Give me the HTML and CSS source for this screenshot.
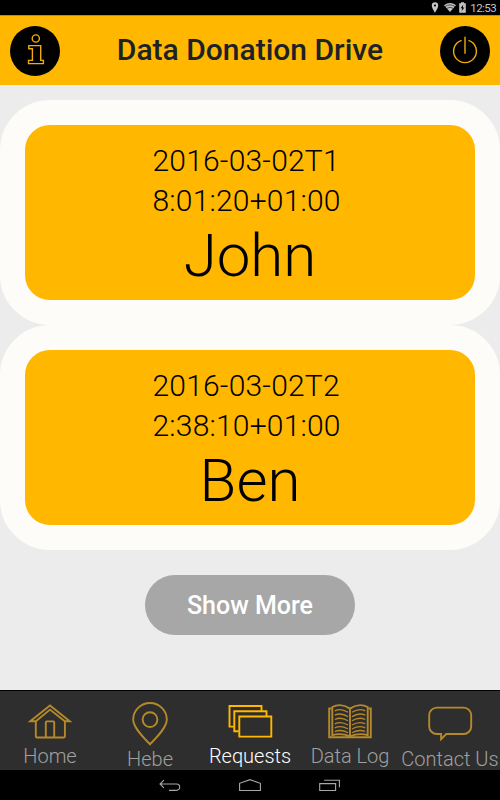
FILE: index.html
```html
<!DOCTYPE html>
<html lang="en">
<head>
    <meta charset="UTF-8">
    <meta name="viewport" content="width=device-width, initial-scale=1.0">
    <title>Data Donation Drive</title>
    <link rel="stylesheet" href="styles.css">
</head>
<body>
    <div class="status-bar">
        <svg class="status-pin" width="8" height="11" viewBox="0 0 8 11"><path fill-rule="evenodd" d="M4 0.3a3.2 3.2 0 0 0-3.2 3.2C0.8 6 4 10.7 4 10.7S7.2 6 7.2 3.5A3.2 3.2 0 0 0 4 0.3zM4 2.4a1.1 1.1 0 1 1 0 2.2 1.1 1.1 0 0 1 0-2.2z"/></svg>
        <svg class="status-wifi" width="12" height="9" viewBox="0 0 12 9"><path d="M0 2.3Q6-2.1 12 2.3L6 9z"/><path class="wifi-gap" d="M1 3.6Q6 0.2 11 3.6M2.6 5.4Q6 3.2 9.4 5.4"/></svg>
        <svg class="status-battery" width="7" height="11" viewBox="0 0 7 11"><path d="M2 0.3h3v1h1.8v9.5H0.2V1.3H2z"/><path class="bolt" d="M4.3 2.6L1.6 6.2h1.6L2.6 9.3l2.8-3.9H3.8z"/></svg>
        <span class="clock">12:53</span>
    </div>

    <div class="header">
        <button class="round-button">
            <svg width="50" height="50" viewBox="0 0 50 50">
                <circle cx="25.8" cy="12.5" r="3.6"/>
                <path d="M18.8 19.6h11.9v14.8h2.7v3.2H18.5v-3.2h3.9V22.8h-3.6z"/>
            </svg>
        </button>
        <h1 class="title">Data Donation Drive</h1>
        <button class="round-button">
            <svg width="50" height="50" viewBox="0 0 50 50">
                <path d="M25 10.7v17"/>
                <path d="M21.6 14.3a11.4 11.4 0 1 0 6.8 0"/>
            </svg>
        </button>
    </div>

    <div class="content">
        <div class="card">
            <div class="date">2016-03-02T1<br>8:01:20+01:00</div>
            <div class="name">John</div>
        </div>
        <div class="card">
            <div class="date">2016-03-02T2<br>2:38:10+01:00</div>
            <div class="name">Ben</div>
        </div>
        <button class="show-more">Show More</button>
    </div>

    <div class="tabs">
        <div class="tab">
            <svg width="50" height="46" viewBox="0 0 50 46">
                <path d="M10.8 20.9V36.2a1.3 1.3 0 0 0 1.3 1.3H38.6a1.3 1.3 0 0 0 1.3-1.3V20.9"/>
                <path d="M10.8 21.3H5.2L25 5.4 44.8 21.3H39.9L25 9.6z"/>
                <path d="M20.8 37.5V22.3q0-.9.9-.9h6.6q.9 0 .9.9V37.5"/>
            </svg>
            <span>Home</span>
        </div>
        <div class="tab lower">
            <svg width="50" height="46" viewBox="0 0 50 46">
                <path d="M25 44.3C19 38 8.2 28 8.2 19.6a16.8 16.6 0 0 1 33.6 0C41.8 28 31 38 25 44.3z"/>
                <circle cx="25" cy="19.6" r="7.4"/>
            </svg>
            <span>Hebe</span>
        </div>
        <div class="tab active">
            <svg width="50" height="46" viewBox="0 0 50 46">
                <path d="M8.8 26.6H4.5V6H36.5v5.3"/>
                <path d="M13.6 31.3H9.3V11.3H41.5v5"/>
                <path d="M14.3 16.5h32v20.1h-32z"/>
            </svg>
            <span>Requests</span>
        </div>
        <div class="tab">
            <svg width="50" height="46" viewBox="0 0 50 46">
                <path d="M6.5 8.5H4.2V37.2H45.8V8.5H43.5"/>
                <path d="M25 8.6Q16 2.5 7.3 7V35.2Q16 32.5 25 36.4 34 32.5 42.7 35.2V7Q34 2.5 25 8.6V36.4"/>
                <g class="lines">
                    <path d="M9.8 10.8Q16 7.8 23 12.3M9.8 15.2Q16 12.2 23 16.6M9.8 19.5Q16 16.5 23 20.8M9.8 23.8Q16 20.8 23 25M9.8 27.8Q16 25 23 29M9.8 31.5Q16 29 23 32.7"/>
                    <path d="M40.2 10.8Q34 7.8 27 12.3M40.2 15.2Q34 12.2 27 16.6M40.2 19.5Q34 16.5 27 20.8M40.2 23.8Q34 20.8 27 25M40.2 27.8Q34 25 27 29M40.2 31.5Q34 29 27 32.7"/>
                </g>
            </svg>
            <span>Data Log</span>
        </div>
        <div class="tab lower">
            <svg width="50" height="46" viewBox="0 0 50 46">
                <path d="M11.8 7.6H38.6a7.6 7.6 0 0 1 7.6 7.6V26.4a7.6 7.6 0 0 1-7.6 7.6H21.3L16.1 39.2V34H11.8a7.6 7.6 0 0 1-7.6-7.6V15.2a7.6 7.6 0 0 1 7.6-7.6z"/>
            </svg>
            <span>Contact Us</span>
        </div>
    </div>

    <div class="nav-bar">
        <svg width="22" height="14" viewBox="0 0 22 14"><path d="M4.9 1.2L1 5l3.9 3.8M1.2 5H17.5a3.2 3.2 0 0 1 0 6.4H10"/></svg>
        <svg width="22" height="14" viewBox="0 0 22 14"><path d="M.6 11.5V4.3L11 .7 21.4 4.3v7.2z"/></svg>
        <svg width="22" height="14" viewBox="0 0 22 14"><path d="M.7 4.6H16.6V11.5H.7zM5.2 1.2H20.4V8.2"/></svg>
    </div>
</body>
</html>
```

FILE: styles.css
```css
* {
    box-sizing: border-box;
    font-family: Roboto, "Liberation Sans", sans-serif;
}

body {
    display: flex;
    flex-direction: column;
    height: 100vh;
    margin: 0;
    background-color: #ececec;
    overflow: hidden;
}

button {
    border: none;
    padding: 0;
    cursor: pointer;
}

svg {
    display: block;
    fill: none;
}

.status-bar {
    display: flex;
    justify-content: flex-end;
    align-items: center;
    height: 15px;
    padding-right: 4px;
    background-color: #000;
    color: #c4c4c4;
}

.status-bar svg {
    fill: #c4c4c4;
}

.status-pin {
    margin-right: 5px;
}

.status-wifi {
    margin-right: 3px;
}

.status-battery {
    margin-right: 4px;
}

.status-bar .wifi-gap {
    fill: none;
    stroke: #000;
    stroke-width: 0.6;
}

.status-bar .bolt {
    fill: #000;
}

.clock {
    padding-top: 1px;
    font-size: 11.5px;
    line-height: 15px;
    letter-spacing: -0.6px;
}

.header {
    display: flex;
    justify-content: space-between;
    align-items: center;
    height: 70px;
    padding: 0 10px;
    background-color: #ffb700;
    border-top: 1px solid #c58e00;
}

.title {
    margin: 0 0 2px;
    font-size: 30px;
    font-weight: 500;
    color: #1c2228;
}

.round-button {
    width: 50px;
    height: 50px;
    border-radius: 50%;
    background-color: #000;
}

.round-button svg {
    stroke: #f0ac0c;
    stroke-width: 1.4;
}

.content {
    flex: 1;
    display: flex;
    flex-direction: column;
    align-items: center;
    padding-top: 15.4px;
}

.card {
    display: flex;
    flex-direction: column;
    align-items: center;
    width: 500px;
    height: 225px;
    padding-top: 16px;
    border: 25px solid #fdfcf8;
    border-radius: 50px;
    background-color: #ffb700;
    color: #000;
}

.date {
    width: 195px;
    font-size: 30px;
    font-weight: 300;
    line-height: 40px;
    letter-spacing: 0.2px;
}

.name {
    font-size: 60px;
    font-weight: 300;
    line-height: 70px;
}

.show-more {
    width: 210px;
    height: 60px;
    margin-top: 25px;
    border-radius: 30px;
    background-color: #a7a7a7;
    color: #fff;
    font-size: 25px;
    font-weight: 500;
}

.tabs {
    display: grid;
    grid-template-columns: repeat(5, 100px);
    height: 80px;
    background-color: #2e2e2e;
    border-top: 1px solid #000;
}

.tab {
    display: flex;
    flex-direction: column;
    align-items: center;
    padding-top: 9px;
    color: #a0a0a0;
    font-size: 20px;
    font-weight: 300;
    white-space: nowrap;
}

.tab span {
    line-height: 20px;
}

.tab svg {
    stroke: #b5892a;
    stroke-width: 1.9;
}

.tab .lines {
    stroke-width: 1.3;
}

.lower span {
    margin-top: 3px;
}

.active {
    color: #fff;
}

.active svg {
    stroke: #ffb700;
}

.nav-bar {
    display: flex;
    justify-content: center;
    gap: 58px;
    height: 30px;
    padding-top: 9px;
    background-color: #000;
}

.nav-bar svg {
    stroke: #a8a8a8;
    stroke-width: 1.1;
}
```
